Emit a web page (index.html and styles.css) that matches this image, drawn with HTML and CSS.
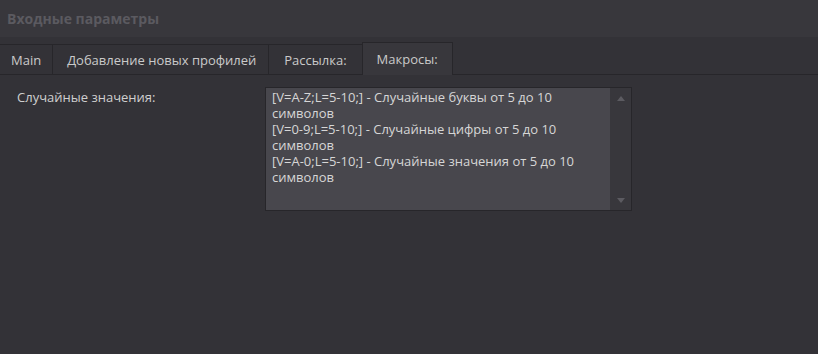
FILE: index.html
```html
<!DOCTYPE html>
<html>
<head>
<meta charset="utf-8">
<link rel="stylesheet" href="styles.css">
</head>
<body>
<div class="header">Входные параметры</div>
<div class="tabs">
  <div class="tab first">Main</div>
  <div class="tab">Добавление новых профилей</div>
  <div class="tab third">Рассылка:</div>
  <div class="tab active">Макросы:</div>
  <div class="tab-rest"></div>
</div>
<div class="content">
  <div class="label">Случайные значения:</div>
  <div class="box">
    <div class="text">[V=A-Z;L=5-10;] - Случайные буквы от 5 до 10 символов<br>[V=0-9;L=5-10;] - Случайные цифры от 5 до 10 символов<br>[V=A-0;L=5-10;] - Случайные значения от 5 до 10 символов</div>
    <div class="scroll">
      <svg width="8" height="5" viewBox="0 0 8 5"><path d="M4 0L8 5H0Z" fill="#5c5b61"/></svg>
      <svg width="8" height="5" viewBox="0 0 8 5"><path d="M0 0H8L4 5Z" fill="#5c5b61"/></svg>
    </div>
  </div>
</div>
</body>
</html>
```
FILE: styles.css
```css
html, body { margin: 0; padding: 0; }
body {
  width: 818px; height: 354px; overflow: hidden;
  background: #333237;
  font-family: "Open Sans", "DejaVu Sans", sans-serif;
  font-size: 13px;
  color: #cfcfcf;
}
.header {
  height: 37px;
  background: #38373c;
  box-sizing: border-box;
  padding: 9px 0 0 7px;
  font-weight: bold;
  font-size: 14px;
  color: #5b5a60;
}
.tabs {
  display: flex;
  align-items: flex-end;
  height: 38px;
}
.tab {
  height: 31px;
  box-sizing: border-box;
  border: 1px solid #27262a;
  border-right: none;
  background: #333237;
  padding: 0 12px 0 14px;
  display: flex; align-items: center;
  color: #cacaca;
}
.tab.first { border-left: none; padding: 0 11px 0 11px; }
.tab.third { padding: 0 15px 0 15px; }
.tab.active {
  height: 33px;
  background: #38373c;
  border-bottom: none;
  border-right: 1px solid #27262a;
  padding: 0 14px 0 14px;
}
.tab-rest {
  flex: 1;
  height: 1px;
  background: #27262a;
  align-self: flex-end;
}
.content {
  display: flex;
  padding: 12px 0 0 17px;
}
.label {
  width: 248px;
  padding-top: 1px;
  color: #cfcfcf;
}
.box {
  width: 367px; height: 124px;
  box-sizing: border-box;
  border: 1px solid #27262a;
  background: #48474d;
  display: flex;
}
.text {
  flex: 1;
  padding: 1px 4px 0 6px;
  line-height: 16px;
  color: #d6d6d6;
}
.scroll {
  width: 21px;
  background: #38373c;
  display: flex; flex-direction: column; justify-content: space-between; align-items: center;
  padding: 8px 0 7px;
}
```
